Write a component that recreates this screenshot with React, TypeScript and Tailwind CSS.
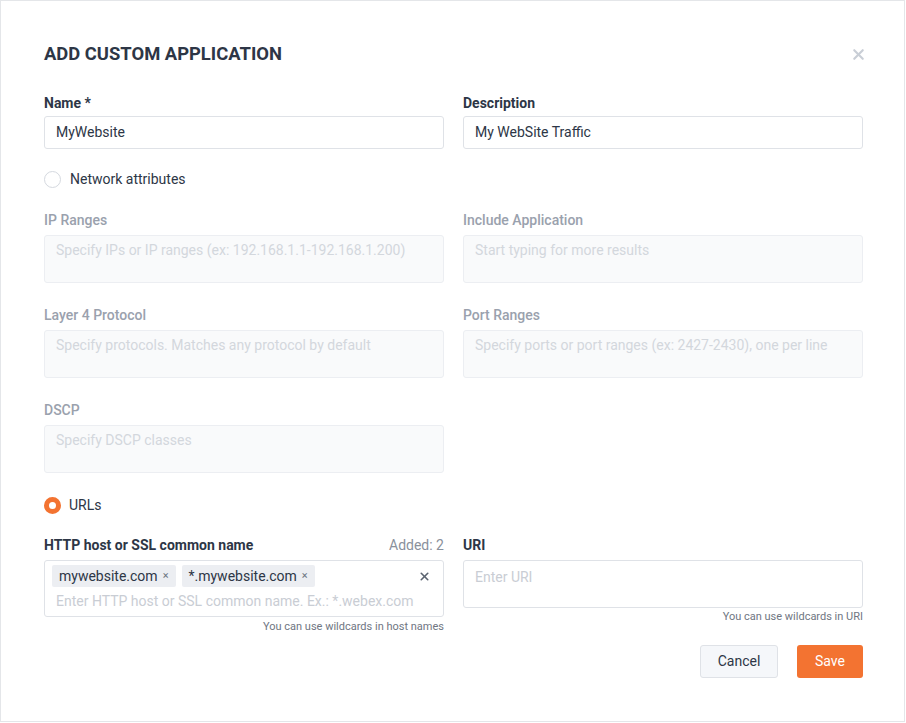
import { X } from "lucide-react"

const font = { fontFamily: "Roboto, 'Noto Sans', sans-serif" }

function DisabledField({ label, placeholder }: { label: string; placeholder: string }) {
  return (
    <div className="flex flex-col">
      <div className="text-[14px] font-medium leading-[20px] text-[#9aa1ad]">{label}</div>
      <div className="mt-[5px] h-[48px] rounded-[3px] border border-[#eceef2] bg-[#f9fafb] px-[11px] pt-[4px] text-[14px] leading-[20px] text-[#d3d7dd]">
        {placeholder}
      </div>
    </div>
  )
}

function Tag({ text }: { text: string }) {
  return (
    <span className="flex h-[22px] items-center gap-[5px] rounded-[2px] bg-[#eceef2] px-[7px] text-[14px] text-[#2d3646]">
      {text}
      <span className="text-[11px] text-[#6b7380]">×</span>
    </span>
  )
}

export default function App() {
  return (
    <div style={font} className="h-[722px] w-[905px] border border-[#e4e6e9] bg-white">
      <div className="pl-[43px] pr-[41px] pt-[40px]">
        {/* Header */}
        <div className="flex items-center justify-between">
          <h1 className="text-[18.4px] font-bold uppercase leading-[26px] text-[#2d3646]">
            Add Custom Application
          </h1>
          <X className="mr-[-4px] h-[17px] w-[17px] text-[#c9ced6]" strokeWidth={3} />
        </div>

        {/* Name / Description */}
        <div className="mt-[26px] grid grid-cols-2 gap-x-[19px]">
          <div className="flex flex-col">
            <div className="text-[14px] font-bold leading-[20px] text-[#2d3646]">Name *</div>
            <div className="mt-[3px] flex h-[33px] items-center rounded-[3px] border border-[#dfe2e7] px-[11px] text-[14px] text-[#2d3646]">
              MyWebsite
            </div>
          </div>
          <div className="flex flex-col">
            <div className="text-[14px] font-bold leading-[20px] text-[#2d3646]">Description</div>
            <div className="mt-[3px] flex h-[33px] items-center rounded-[3px] border border-[#dfe2e7] px-[11px] text-[14px] text-[#2d3646]">
              My WebSite Traffic
            </div>
          </div>
        </div>

        {/* Network attributes radio */}
        <div className="mt-[20px] flex items-center gap-[9px]">
          <span className="h-[17px] w-[17px] rounded-full border border-[#d5d9df] bg-white" />
          <span className="text-[14px] leading-[20px] text-[#2d3646]">Network attributes</span>
        </div>

        <div className="mt-[21px] grid grid-cols-2 gap-x-[19px] gap-y-[22px]">
          <DisabledField label="IP Ranges" placeholder="Specify IPs or IP ranges (ex: 192.168.1.1-192.168.1.200)" />
          <DisabledField label="Include Application" placeholder="Start typing for more results" />
          <DisabledField label="Layer 4 Protocol" placeholder="Specify protocols. Matches any protocol by default" />
          <DisabledField label="Port Ranges" placeholder="Specify ports or port ranges (ex: 2427-2430), one per line" />
          <DisabledField label="DSCP" placeholder="Specify DSCP classes" />
        </div>

        {/* URLs radio */}
        <div className="mt-[22px] flex items-center gap-[8px]">
          <span className="h-[17px] w-[17px] rounded-full border-[5px] border-[#f37331] bg-white" />
          <span className="text-[14px] leading-[20px] text-[#2d3646]">URLs</span>
        </div>

        <div className="mt-[20px] grid grid-cols-2 gap-x-[19px]">
          <div className="flex flex-col">
            <div className="flex items-center justify-between">
              <div className="text-[14px] font-bold leading-[20px] text-[#2d3646]">HTTP host or SSL common name</div>
              <div className="text-[14px] leading-[20px] text-[#8a919c]">Added: 2</div>
            </div>
            <div className="mt-[5px] h-[57px] rounded-[3px] border border-[#dfe2e7] pl-[7px] pr-[12px] pt-[4px]">
              <div className="flex items-center gap-[6px]">
                <Tag text="mywebsite.com" />
                <Tag text="*.mywebsite.com" />
                <X className="ml-auto h-[13px] w-[13px] text-[#5b6370]" strokeWidth={3} />
              </div>
              <div className="mt-[4px] pl-[4px] text-[14px] leading-[20px] text-[#c9cdd4]">
                Enter HTTP host or SSL common name. Ex.: *.webex.com
              </div>
            </div>
            <div className="mt-[2px] text-right text-[11px] leading-[16px] text-[#6f7682]">
              You can use wildcards in host names
            </div>
          </div>
          <div className="flex flex-col">
            <div className="text-[14px] font-bold leading-[20px] text-[#2d3646]">URI</div>
            <div className="mt-[5px] h-[48px] rounded-[3px] border border-[#dfe2e7] px-[11px] pt-[6px] text-[14px] leading-[20px] text-[#c9cdd4]">
              Enter URI
            </div>
            <div className="mt-[1px] text-right text-[11px] leading-[16px] text-[#6f7682]">
              You can use wildcards in URI
            </div>
          </div>
        </div>

        {/* Footer buttons */}
        <div className="mt-[10px] flex justify-end gap-[19px]">
          <button className="h-[33px] w-[78px] rounded-[3px] border border-[#dfe2e7] bg-[#f5f7fa] text-[14px] text-[#2d3646]">
            Cancel
          </button>
          <button className="h-[33px] w-[66px] rounded-[3px] bg-[#f37331] text-[14px] text-white">
            Save
          </button>
        </div>
      </div>
    </div>
  )
}
